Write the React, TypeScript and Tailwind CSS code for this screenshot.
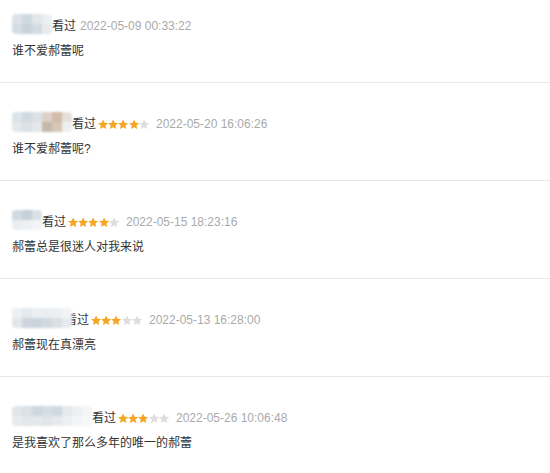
import React from "react";

type Review = {
  cells: string[][];
  overlap?: boolean;
  stars?: number;
  date: string;
  text: string;
};

const REVIEWS: Review[] = [
  {
    cells: [
      ["#dce2e7", "#d0d9e0", "#e2e7ea", "#edf0f2"],
      ["#d5dde4", "#c8d3db", "#d3dce2", "#e7ebee"],
    ],
    date: "2022-05-09 00:33:22",
    text: "谁不爱郝蕾呢",
  },
  {
    cells: [
      ["#dde4e9", "#cfd9e0", "#dbe1e5", "#dcd1c9", "#cfbba8", "#e6e0da"],
      ["#e2e8ec", "#dae2e7", "#e4e8ec", "#c8b8a9", "#d6c7b8", "#edf0f2"],
    ],
    stars: 4,
    date: "2022-05-20 16:06:26",
    text: "谁不爱郝蕾呢?",
  },
  {
    cells: [
      ["#d2dae1", "#c5d0d9", "#dae1e7"],
      ["#eaeef1", "#eef1f3", "#f2f4f5"],
    ],
    stars: 4,
    date: "2022-05-15 18:23:16",
    text: "郝蕾总是很迷人对我来说",
  },
  {
    cells: [
      ["#edf0f2", "#e4e9ed", "#edf0f2", "#ebeef1", "#edf0f2", "#f1f3f5"],
      ["#e1e7eb", "#ccd5dd", "#cad4dc", "#d0d9e0", "#d9e0e5", "#e7ebee"],
    ],
    overlap: true,
    stars: 3,
    date: "2022-05-13 16:28:00",
    text: "郝蕾现在真漂亮",
  },
  {
    cells: [
      ["#e0e6ea", "#dae1e7", "#cdd7df", "#d6dde4", "#d0d9e0", "#e4e9ed", "#edf0f2", "#f3f5f6"],
      ["#e7ebee", "#e1e7eb", "#e4e9ec", "#dfe5e9", "#e6eaee", "#edf0f2", "#f2f4f5", "#f6f7f8"],
    ],
    stars: 3,
    date: "2022-05-26 10:06:48",
    text: "是我喜欢了那么多年的唯一的郝蕾",
  },
];

function Star({ on }: { on: boolean }) {
  return (
    <svg viewBox="1.5 1.5 21 20" className="h-[10.5px] w-[10.2px]" aria-hidden="true">
      <path
        d="M12 1.8l3.1 6.6 7.2.8-5.4 4.9 1.5 7.1L12 17.6l-6.4 3.6 1.5-7.1L1.7 9.2l7.2-.8L12 1.8z"
        fill={on ? "#f5a623" : "#dddddd"}
      />
    </svg>
  );
}

function Mosaic({ cells, overlap }: { cells: string[][]; overlap?: boolean }) {
  return (
    <div
      className={
        overlap
          ? "relative z-10 -mr-[7px] mt-[-5px] flex flex-col overflow-hidden rounded-[4px] blur-[1.2px]"
          : "mt-[-4px] flex flex-col overflow-hidden rounded-[4px] blur-[1.2px]"
      }
    >
      {cells.map((row, i) => (
        <div key={i} className="flex">
          {row.map((c, j) => (
            <div key={j} className="h-[10px] w-[10px]" style={{ backgroundColor: c }} />
          ))}
        </div>
      ))}
    </div>
  );
}

export default function App() {
  return (
    <div className="min-h-[473px] w-[550px] bg-white font-['Liberation_Sans','Noto_Sans_CJK_SC',sans-serif] text-[12px]">
      {REVIEWS.map((r, i) => (
        <div
          key={i}
          className={
            (i === 0 ? "pt-[16px] " : "pt-[31px] ") +
            "border-b border-[#e8e8e8] pb-[21px] pl-[12px]"
          }
        >
          <div className="flex h-[20px] items-center">
            <Mosaic cells={r.cells} overlap={r.overlap} />
            <span className="text-[#333]">看过</span>
            {r.stars !== undefined && (
              <span className="ml-[2px] flex items-center">
                {[0, 1, 2, 3, 4].map((k) => (
                  <Star key={k} on={k < (r.stars ?? 0)} />
                ))}
              </span>
            )}
            <span className={(r.stars !== undefined ? "ml-[7px] " : "ml-[4px] ") + "text-[#aaa]"}>
              {r.date}
            </span>
          </div>
          <p className="mt-[5px] h-[20px] leading-[20px] text-[#333]">{r.text}</p>
        </div>
      ))}
    </div>
  );
}
